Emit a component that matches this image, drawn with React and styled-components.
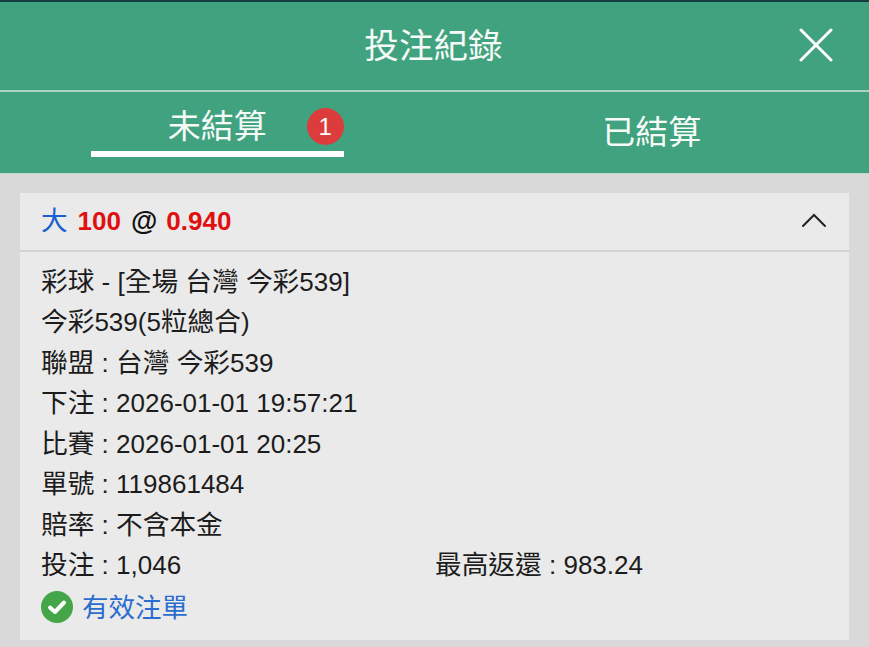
import React from "react";
import styled, { createGlobalStyle } from "styled-components";

const Global = createGlobalStyle`
  html, body { margin: 0; padding: 0; background: #d9d9d9; }
  body { font-family: "Liberation Sans", "Noto Sans CJK TC", sans-serif; }
`;
const Page = styled.div`
  width: 869px; height: 647px; overflow: hidden; background: #d9d9d9;
  display: flex; flex-direction: column;
`;
const TopBar = styled.header`
  height: 90px; flex: none; box-sizing: border-box; background: #41a27f;
  border-top: 2px solid #143f3f; display: flex; align-items: center; justify-content: center;
  position: relative; padding: 0 2px 6px 0;
`;
const Title = styled.h1`
  margin: 0; font: 400 34.6px/44px "Noto Sans CJK TC", sans-serif; color: #f6fbf8;
`;
const Close = styled.button`
  position: absolute; right: 36px; top: 26px; width: 34px; height: 34px; padding: 0;
  border: 0; background: none; color: #fff; display: flex;
`;
const Rule = styled.div`
  height: 2px; flex: none; background: #a9d5c3;
`;
const Tabs = styled.nav`
  height: 82px; flex: none; background: #41a27f; display: grid; grid-template-columns: 1fr 1fr;
  border-bottom: 1px solid #b9d9cb; box-sizing: border-box;
`;
const Tab = styled.div`
  display: flex; justify-content: center; align-items: flex-start;
  padding-top: ${p => (p.$active ? 11 : 17)}px;
`;
const TabLabel = styled.div`
  position: relative; box-sizing: border-box; text-align: center;
  width: ${p => (p.$active ? "253px" : "auto")};
  height: ${p => (p.$active ? "54px" : "auto")};
  border-bottom: ${p => (p.$active ? "6px solid #fff" : "none")};
  font: 400 33px/42px "Noto Sans CJK TC", sans-serif; color: #f6fbf8;
`;
const Badge = styled.span`
  position: absolute; right: 0; top: 5px; width: 37px; height: 37px; border-radius: 50%;
  background: #dc3c3c; color: #fff; font: 400 24px/37px "Liberation Sans", sans-serif; text-align: center;
`;
const Content = styled.main`
  flex: 1; padding: 19px 20px 0; min-height: 0;
`;
const Card = styled.article`
  background: #eaeaea; height: 447px; display: flex; flex-direction: column;
`;
const CardHead = styled.div`
  height: 59px; flex: none; box-sizing: border-box; border-bottom: 2px solid #d3d3d3;
  display: flex; align-items: center; justify-content: space-between;
  padding: 0 22px 2px 21px;
`;
const Summary = styled.div`
  font-size: 26px; font-weight: 700; line-height: 34px; color: #111; display: flex; gap: 10px; white-space: pre;
`;
const Side = styled.span`
  color: #1a5fd0; font-weight: 400; font-size: 26.6px;
`;
const Red = styled.span`
  color: #e01010;
`;
const At = styled.span`
  color: #111; font-weight: 700; font-size: 27px; margin-right: -1px;
`;
const Chevron = styled.svg`
  width: 26px; height: 16px; color: #222; margin-top: -2px;
`;
const CardBody = styled.div`
  padding: 10px 21px 0; font-size: 26px; color: #1c1c1c;
`;
const Line = styled.div`
  height: 40.45px; line-height: 40px; white-space: pre;
`;
const SplitLine = styled(Line)`
  display: grid; grid-template-columns: 394px 1fr;
`;
const Han = styled.span`
  font-size: 26.7px;
`;
const Status = styled.div`
  display: flex; align-items: center; gap: 9px; height: 42px; color: #2a6ccf;
`;
const StatusText = styled.span`
  padding-bottom: 3px; font-size: 26.5px;
`;

// CJK glyphs sit a little larger than the Latin text in the reference.
function Mixed({ children }) {
  return children
    .split(/([\u3400-\u9fff]+)/)
    .map((part, i) => (i % 2 ? <Han key={i}>{part}</Han> : part));
}

const rows = [
  "彩球 - [全場 台灣 今彩539]",
  "今彩539(5粒總合)",
  "聯盟 : 台灣 今彩539",
  "下注 : 2026-01-01 19:57:21",
  "比賽 : 2026-01-01 20:25",
  "單號 : 119861484",
  "賠率 : 不含本金",
];

export default function App() {
  return (
    <Page>
      <Global />
      <TopBar>
        <Title>投注紀錄</Title>
        <Close aria-label="關閉">
          <svg width="34" height="34" viewBox="0 0 34 34" fill="none" stroke="currentColor" strokeWidth="3" strokeLinecap="round">
            <path d="M2 2 L32 32 M32 2 L2 32" />
          </svg>
        </Close>
      </TopBar>
      <Rule />
      <Tabs>
        <Tab $active>
          <TabLabel $active>未結算<Badge>1</Badge></TabLabel>
        </Tab>
        <Tab>
          <TabLabel>已結算</TabLabel>
        </Tab>
      </Tabs>
      <Content>
        <Card>
          <CardHead>
            <Summary>
              <Side>大</Side>
              <Red>100</Red>
              <At>@</At>
              <Red>0.940</Red>
            </Summary>
            <Chevron viewBox="0 0 26 16" fill="none" stroke="currentColor" strokeWidth="2" strokeLinecap="round">
              <path d="M2 14 L13 3 L24 14" />
            </Chevron>
          </CardHead>
          <CardBody>
            {rows.map(r => (
              <Line key={r}><Mixed>{r}</Mixed></Line>
            ))}
            <SplitLine>
              <span><Mixed>投注 : 1,046</Mixed></span>
              <span><Mixed>最高返還 : 983.24</Mixed></span>
            </SplitLine>
            <Status>
              <svg width="32" height="32" viewBox="0 0 32 32">
                <circle cx="16" cy="16" r="16" fill="#45a649" />
                <path d="M9 16.5 L14 21 L23 11.5" fill="none" stroke="#fff" strokeWidth="4" strokeLinecap="round" strokeLinejoin="round" />
              </svg>
              <StatusText>有效注單</StatusText>
            </Status>
          </CardBody>
        </Card>
      </Content>
    </Page>
  );
}
